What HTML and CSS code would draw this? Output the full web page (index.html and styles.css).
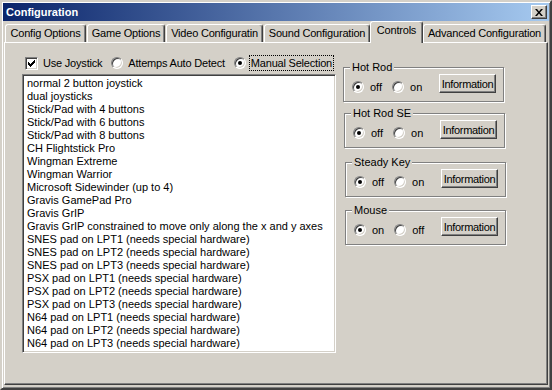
FILE: index.html
```html
<!DOCTYPE html>
<html lang="en">
<head>
    <meta charset="UTF-8">
    <title>Configuration</title>
    <link rel="stylesheet" href="styles.css">
</head>
<body>
    <div class="window">
        <div class="titlebar">
            <span class="title">Configuration</span>
            <button class="close" aria-label="Close">
                <svg width="8" height="7" viewBox="0 0 8 7">
                    <path d="M0 0h2l2 2.5L6 0h2L5 3.5 8 7H6L4 4.5 2 7H0l3-3.5z" fill="#000"/>
                </svg>
            </button>
        </div>

        <div class="tabs">
            <div class="tab t-config">Config Options</div>
            <div class="tab t-game">Game Options</div>
            <div class="tab t-video">Video Configuratin</div>
            <div class="tab t-sound">Sound Configuration</div>
            <div class="tab t-controls active">Controls</div>
            <div class="tab t-advanced">Advanced Configuration</div>
        </div>

        <div class="panel">
            <div class="left">
                <div class="options">
                    <label class="opt">
                        <span class="check">
                            <svg width="9" height="9" viewBox="0 0 9 9">
                                <path d="M1 3h1v1h1v1h1V4h1V3h1V2h1V1h1v3H7v1H6v1H5v1H4v1H3V7H2V6H1z" fill="#000"/>
                            </svg>
                        </span>
                        Use Joystick
                    </label>
                    <label class="opt"><span class="radio"></span>Attemps Auto Detect</label>
                    <label class="opt"><span class="radio on"></span><span class="focus">Manual Selection</span></label>
                </div>

                <ul class="list">
                    <li>normal 2 button joystick</li>
                    <li>dual joysticks</li>
                    <li>Stick/Pad with 4 buttons</li>
                    <li>Stick/Pad with 6 buttons</li>
                    <li>Stick/Pad with 8 buttons</li>
                    <li>CH Flightstick Pro</li>
                    <li>Wingman Extreme</li>
                    <li>Wingman Warrior</li>
                    <li>Microsoft Sidewinder (up to 4)</li>
                    <li>Gravis GamePad Pro</li>
                    <li>Gravis GrIP</li>
                    <li>Gravis GrIP constrained to move only along the x and y axes</li>
                    <li>SNES pad on LPT1 (needs special hardware)</li>
                    <li>SNES pad on LPT2 (needs special hardware)</li>
                    <li>SNES pad on LPT3 (needs special hardware)</li>
                    <li>PSX pad on LPT1 (needs special hardware)</li>
                    <li>PSX pad on LPT2 (needs special hardware)</li>
                    <li>PSX pad on LPT3 (needs special hardware)</li>
                    <li>N64 pad on LPT1 (needs special hardware)</li>
                    <li>N64 pad on LPT2 (needs special hardware)</li>
                    <li>N64 pad on LPT3 (needs special hardware)</li>
                </ul>
            </div>

            <div class="right">
                <div class="group">
                    <span class="group-label">Hot Rod</span>
                    <div class="group-row">
                        <label class="opt"><span class="radio on"></span>off</label>
                        <label class="opt"><span class="radio"></span>on</label>
                        <button class="btn">Information</button>
                    </div>
                </div>
                <div class="group g2">
                    <span class="group-label">Hot Rod SE</span>
                    <div class="group-row">
                        <label class="opt"><span class="radio on"></span>off</label>
                        <label class="opt"><span class="radio"></span>on</label>
                        <button class="btn">Information</button>
                    </div>
                </div>
                <div class="group g3">
                    <span class="group-label">Steady Key</span>
                    <div class="group-row">
                        <label class="opt"><span class="radio on"></span>off</label>
                        <label class="opt"><span class="radio"></span>on</label>
                        <button class="btn">Information</button>
                    </div>
                </div>
                <div class="group g4">
                    <span class="group-label">Mouse</span>
                    <div class="group-row">
                        <label class="opt"><span class="radio on"></span>on</label>
                        <label class="opt"><span class="radio"></span>off</label>
                        <button class="btn">Information</button>
                    </div>
                </div>
            </div>
        </div>
    </div>
</body>
</html>
```

FILE: styles.css
```css
* {
    margin: 0;
    padding: 0;
    box-sizing: border-box;
}

body {
    background: #d4d0c8;
    font-family: 'Liberation Sans', Arial, sans-serif;
    font-size: 11px;
    color: #000;
}

.window {
    width: 552px;
    height: 390px;
    display: flex;
    flex-direction: column;
    padding: 1px;
    border: 2px solid;
    border-color: #d4d0c8 #404040 #404040 #d4d0c8;
    box-shadow: inset 1px 1px 0 #fff, inset -1px -1px 0 #808080;
    background: #d4d0c8;
}

.titlebar {
    height: 18px;
    display: flex;
    align-items: center;
    padding: 0 2px 0 3px;
    background: linear-gradient(90deg, #0a246a, #a6caf0);
}

.title {
    color: #fff;
    font-weight: bold;
    flex-grow: 1;
}

.close {
    width: 16px;
    height: 14px;
    display: flex;
    align-items: center;
    justify-content: center;
    background: #d4d0c8;
    border: 1px solid;
    border-color: #fff #404040 #404040 #fff;
    box-shadow: inset -1px -1px 0 #808080;
}

/* tabs */
.tabs {
    display: flex;
    align-items: flex-end;
    height: 21px;
    padding-left: 2px;
    position: relative;
    z-index: 1;
}

.tab {
    height: 18px;
    padding-top: 2px;
    text-align: center;
    letter-spacing: -0.2px;
    border: 1px solid;
    border-bottom: none;
    border-color: #fff #404040 transparent #fff;
    border-radius: 3px 3px 0 0;
    box-shadow: inset -1px 0 0 #808080;
    white-space: nowrap;
    margin-right: 1px;
}

.t-config { width: 81px; }
.t-game { width: 78px; }
.t-video { width: 97px; }
.t-sound { width: 106px; }
.t-controls { width: 51px; }
.t-advanced { width: 123px; }

.tab.active {
    width: 53px;
    height: 22px;
    margin: 0 0 -1px -1px;
    background: #d4d0c8;
}

/* page */
.panel {
    flex-grow: 1;
    display: flex;
    align-items: flex-start;
    margin: 0 1px 2px;
    padding: 12px 0 0 17px;
    border: 1px solid;
    border-color: #fff #404040 #404040 #fff;
    box-shadow: inset -1px -1px 0 #808080;
}

.left {
    width: 314px;
}

.options {
    height: 16px;
    display: flex;
    align-items: center;
    padding-left: 3px;
    margin-bottom: 3px;
    letter-spacing: -0.2px;
}

.opt {
    display: flex;
    align-items: center;
    white-space: nowrap;
}

.check {
    width: 13px;
    height: 13px;
    margin-right: 5px;
    border: 1px solid;
    border-color: #808080 #fff #fff #808080;
    box-shadow: inset 1px 1px 0 #404040, inset -1px -1px 0 #d4d0c8;
    background: #fff;
    display: flex;
    align-items: center;
    justify-content: center;
}

.radio {
    width: 12px;
    height: 12px;
    margin-right: 5px;
    border-radius: 50%;
    border: 1px solid;
    border-color: #808080 #fff #fff #808080;
    box-shadow: inset 1px 1px 0 #404040, inset -1px -1px 0 #d4d0c8;
    background: #fff;
    display: flex;
    align-items: center;
    justify-content: center;
}

.radio.on::after {
    content: "";
    width: 4px;
    height: 4px;
    border-radius: 50%;
    background: #000;
}

.options .opt {
    margin-right: 9px;
}

.options .opt:last-child {
    margin-right: 0;
}

.focus {
    border: 1px dotted #000;
    padding: 1px;
    margin-left: -2px;
}

.list {
    list-style: none;
    height: 279px;
    background: #fff;
    border: 1px solid;
    border-color: #808080 #fff #fff #808080;
    box-shadow: inset 1px 1px 0 #404040, inset -1px -1px 0 #d4d0c8;
    padding: 2px 0 0 4px;
    overflow: hidden;
}

.list li {
    height: 13px;
    line-height: 13px;
    white-space: nowrap;
}

/* group boxes */
.right {
    width: 161px;
    margin: 12px 0 0 7px;
    display: flex;
    flex-direction: column;
}

.group {
    height: 35px;
    border: 1px solid #808080;
    box-shadow: inset 1px 1px 0 #fff, 1px 1px 0 #fff;
    margin-bottom: 11px;
}

.g2 {
    margin: 0 -1px 14px 1px;
}

.g3 {
    margin: 0 -2px 13px 2px;
}

.g4 {
    margin: 0 -2px 0 2px;
}

.group-label {
    display: block;
    width: fit-content;
    height: 13px;
    line-height: 13px;
    margin: -7px 0 0 6px;
    padding: 0 2px;
    background: #d4d0c8;
}

.group-row {
    display: flex;
    align-items: flex-end;
    height: 19px;
    padding: 0 7px 0 8px;
}

.group-row .opt {
    margin-right: 10px;
    height: 13px;
}

.group-row .radio {
    margin-right: 6px;
}

.btn {
    margin-left: auto;
    width: 57px;
    height: 19px;
    font-family: inherit;
    font-size: 11px;
    letter-spacing: -0.3px;
    color: #000;
    background: #d4d0c8;
    border: 1px solid;
    border-color: #fff #404040 #404040 #fff;
    box-shadow: inset -1px -1px 0 #808080;
}
```
